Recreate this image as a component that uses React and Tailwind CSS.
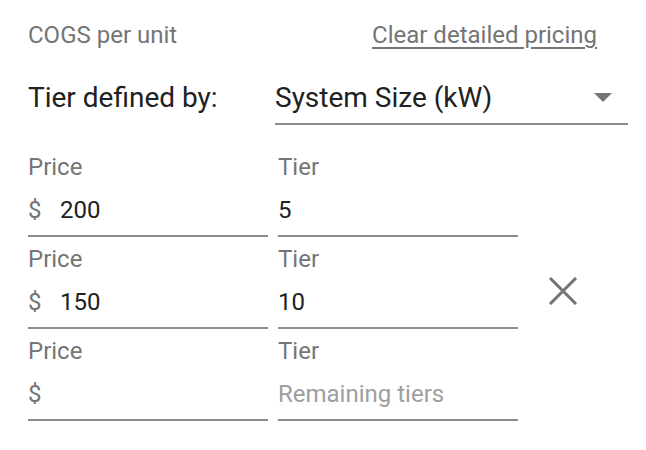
import React from "react";

const rows = [
  { price: "200", tier: "5" },
  { price: "150", tier: "10", removable: true },
  { price: "", tier: "", placeholder: "Remaining tiers" }
];

// Single underlined field with a floating label
function Field({ label, prefix, value, placeholder }) {
  return (
    <div className="w-[240px] border-b-2 border-[#8c8c8c] pt-[10px] pb-[5px]">
      <div className="text-[24px] leading-[24px] text-[#757575]">{label}</div>
      <div className="mt-[11px] flex items-center h-[40px] text-[24px] leading-[40px]">
        {prefix && <span className="text-[#757575] w-[32px]">{prefix}</span>}
        {value ? (
          <span className="text-[#212121]">{value}</span>
        ) : (
          <span className="text-[#9e9e9e]">{placeholder}</span>
        )}
      </div>
    </div>
  );
}

function CloseIcon() {
  return (
    <svg width="30" height="28" viewBox="0 0 30 28" className="block">
      <path d="M2 1 L28 27 M28 1 L2 27" stroke="#757575" strokeWidth="3" fill="none" />
    </svg>
  );
}

export default function App() {
  return (
    <div className="w-[646px] h-[450px] bg-white pl-[28px] pt-[20px] font-['Roboto',sans-serif]">
      {/* Header */}
      <div className="flex items-center justify-between w-[569px] h-[30px]">
        <span className="text-[24px] leading-[30px] text-[#757575]">COGS per unit</span>
        <span className="text-[24px] leading-[30px] text-[#757575] underline underline-offset-[4px]">
          Clear detailed pricing
        </span>
      </div>

      {/* Tier selector */}
      <div className="mt-[32px] flex">
        <div className="w-[247px] text-[28px] leading-[32px] text-[#212121]">Tier defined by:</div>
        <div className="w-[353px] border-b-2 border-[#8c8c8c] pb-[9px] flex items-center justify-between">
          <span className="text-[28px] leading-[32px] text-[#212121]">System Size (kW)</span>
          <svg width="18" height="10" viewBox="0 0 18 10" className="mr-[16px]">
            <path d="M0 0 L18 0 L9 9 Z" fill="#757575" />
          </svg>
        </div>
      </div>

      {/* Tier rows */}
      <div className="mt-[20px] flex flex-col">
        {rows.map((row, i) => (
          <div key={i} className="flex">
            <Field label="Price" prefix="$" value={row.price} />
            <div className="ml-[10px]">
              <Field label="Tier" value={row.tier} placeholder={row.placeholder} />
            </div>
            {row.removable && (
              <div className="ml-[30px] mt-[40px]">
                <CloseIcon />
              </div>
            )}
          </div>
        ))}
      </div>
    </div>
  );
}
